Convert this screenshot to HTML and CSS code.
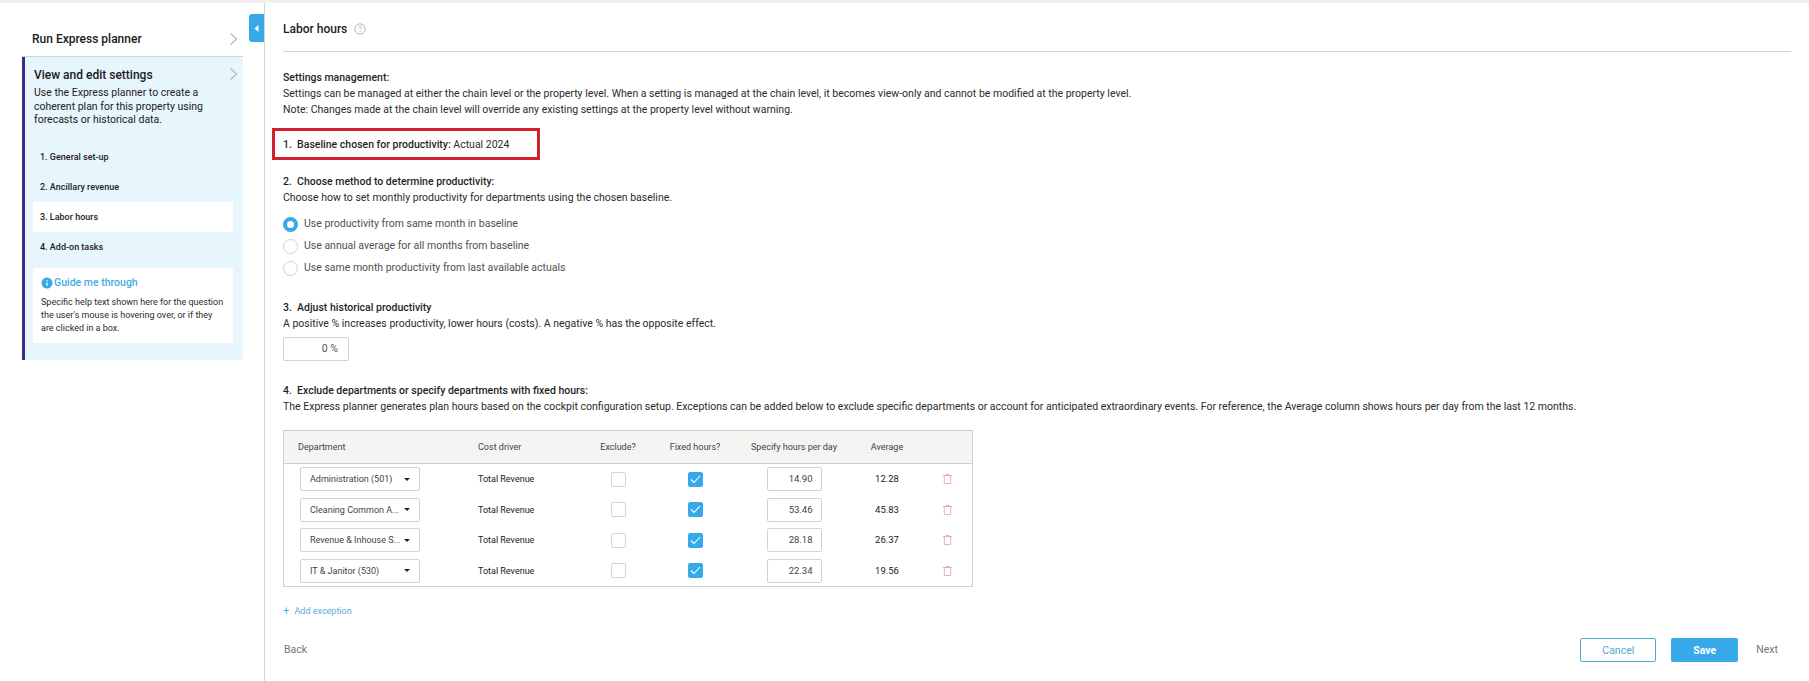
FILE: index.html
```html
<!DOCTYPE html>
<html lang="en">
<head>
<meta charset="utf-8">
<title>Labor hours</title>
<link rel="stylesheet" href="styles.css">
</head>
<body>
<div class="app">
  <aside class="sidebar">
    <div class="run">
      <span>Run Express planner</span>
      <svg class="chev" width="9" height="14" viewBox="0 0 9 14"><path d="M1.5 1.5 7.5 7l-6 5.5" fill="none" stroke="#b5b9bc" stroke-width="1.2"/></svg>
    </div>
    <section class="panel">
      <div class="panel-head">
        <h2>View and edit settings</h2>
        <svg class="chev" width="9" height="14" viewBox="0 0 9 14"><path d="M1.5 1.5 7.5 7l-6 5.5" fill="none" stroke="#b5b9bc" stroke-width="1.2"/></svg>
      </div>
      <p class="panel-desc">Use the Express planner to create a coherent plan for this property using forecasts or historical data.</p>
      <ul class="steps">
        <li>1. General set-up</li>
        <li>2. Ancillary revenue</li>
        <li class="active">3. Labor hours</li>
        <li>4. Add-on tasks</li>
      </ul>
      <div class="guide">
        <div class="guide-title">
          <svg width="12" height="12" viewBox="0 0 12 12"><circle cx="6" cy="6" r="5.5" fill="#36a9e8"/><path d="M6 5.2v3.6M6 3v1.1" stroke="#fff" stroke-width="1.2"/></svg>
          <span>Guide me through</span>
        </div>
        <p>Specific help text shown here for the question the user's mouse is hovering over, or if they are clicked in a box.</p>
      </div>
    </section>
    <button class="collapse" type="button" aria-label="Collapse"><svg width="5" height="7" viewBox="0 0 5 7"><path d="M4.5 0 0.5 3.5 4.5 7z" fill="#fff"/></svg></button>
  </aside>
  <main class="main">
    <header class="title">
      <h1>Labor hours</h1>
      <svg width="12" height="12" viewBox="0 0 12 12"><circle cx="6" cy="6" r="5.2" fill="none" stroke="#a9adaf" stroke-width=".9"/><path d="M4.5 4.7c0-2 3-2 3-.2 0 1.2-1.5 1.1-1.5 2.5M6 8.1v1" fill="none" stroke="#999d9f" stroke-width=".8"/></svg>
    </header>
    <section class="intro">
      <p class="strong">Settings management:</p>
      <p>Settings can be managed at either the chain level or the property level. When a setting is managed at the chain level, it becomes view-only and cannot be modified at the property level.</p>
      <p>Note: Changes made at the chain level will override any existing settings at the property level without warning.</p>
    </section>
    <div class="baseline"><span class="strong">1.&nbsp; Baseline chosen for productivity:</span> Actual 2024</div>
    <section class="method">
      <p class="strong">2.&nbsp; Choose method to determine productivity:</p>
      <p>Choose how to set monthly productivity for departments using the chosen baseline.</p>
      <div class="radios">
        <div class="radio-row"><span class="radio on"></span>Use productivity from same month in baseline</div>
        <div class="radio-row"><span class="radio"></span>Use annual average for all months from baseline</div>
        <div class="radio-row"><span class="radio"></span>Use same month productivity from last available actuals</div>
      </div>
    </section>
    <section class="adjust">
      <p class="strong">3.&nbsp; Adjust historical productivity</p>
      <p>A positive % increases productivity, lower hours (costs). A negative % has the opposite effect.</p>
      <div class="pct">0 %</div>
    </section>
    <section class="exclude">
      <p class="strong">4.&nbsp; Exclude departments or specify departments with fixed hours:</p>
      <p>The Express planner generates plan hours based on the cockpit configuration setup. Exceptions can be added below to exclude specific departments or account for anticipated extraordinary events. For reference, the Average column shows hours per day from the last 12 months.</p>
    </section>
    <div class="table">
      <div class="row head">
        <div class="c-dept head-dept">Department</div>
        <div class="c-cost">Cost driver</div>
        <div class="c-ex">Exclude?</div>
        <div class="c-fix">Fixed hours?</div>
        <div class="c-hrs">Specify hours per day</div>
        <div class="c-avg">Average</div>
        <div class="c-del"></div>
      </div>
      <div class="row">
        <div class="c-dept"><div class="select"><span>Administration (501)</span><i class="caret"></i></div></div>
        <div class="c-cost">Total Revenue</div>
        <div class="c-ex"><span class="check"></span></div>
        <div class="c-fix"><span class="check on"><svg width="11" height="9" viewBox="0 0 11 9"><path d="M1 4.5 4 7.5 10 1" fill="none" stroke="#fff" stroke-width="1.1"/></svg></span></div>
        <div class="c-hrs"><div class="num">14.90</div></div>
        <div class="c-avg">12.28</div>
        <div class="c-del"><svg width="9" height="10" viewBox="0 0 9 10"><path d="M0 1.5h9M3 1.5V.5h3v1M1.3 1.5v8h6.4v-8" fill="none" stroke="#e3a0a0" stroke-width=".8"/></svg></div>
      </div>
      <div class="row">
        <div class="c-dept"><div class="select"><span>Cleaning Common A...</span><i class="caret"></i></div></div>
        <div class="c-cost">Total Revenue</div>
        <div class="c-ex"><span class="check"></span></div>
        <div class="c-fix"><span class="check on"><svg width="11" height="9" viewBox="0 0 11 9"><path d="M1 4.5 4 7.5 10 1" fill="none" stroke="#fff" stroke-width="1.1"/></svg></span></div>
        <div class="c-hrs"><div class="num">53.46</div></div>
        <div class="c-avg">45.83</div>
        <div class="c-del"><svg width="9" height="10" viewBox="0 0 9 10"><path d="M0 1.5h9M3 1.5V.5h3v1M1.3 1.5v8h6.4v-8" fill="none" stroke="#e3a0a0" stroke-width=".8"/></svg></div>
      </div>
      <div class="row">
        <div class="c-dept"><div class="select"><span>Revenue &amp; Inhouse S...</span><i class="caret"></i></div></div>
        <div class="c-cost">Total Revenue</div>
        <div class="c-ex"><span class="check"></span></div>
        <div class="c-fix"><span class="check on"><svg width="11" height="9" viewBox="0 0 11 9"><path d="M1 4.5 4 7.5 10 1" fill="none" stroke="#fff" stroke-width="1.1"/></svg></span></div>
        <div class="c-hrs"><div class="num">28.18</div></div>
        <div class="c-avg">26.37</div>
        <div class="c-del"><svg width="9" height="10" viewBox="0 0 9 10"><path d="M0 1.5h9M3 1.5V.5h3v1M1.3 1.5v8h6.4v-8" fill="none" stroke="#e3a0a0" stroke-width=".8"/></svg></div>
      </div>
      <div class="row">
        <div class="c-dept"><div class="select"><span>IT &amp; Janitor (530)</span><i class="caret"></i></div></div>
        <div class="c-cost">Total Revenue</div>
        <div class="c-ex"><span class="check"></span></div>
        <div class="c-fix"><span class="check on"><svg width="11" height="9" viewBox="0 0 11 9"><path d="M1 4.5 4 7.5 10 1" fill="none" stroke="#fff" stroke-width="1.1"/></svg></span></div>
        <div class="c-hrs"><div class="num">22.34</div></div>
        <div class="c-avg">19.56</div>
        <div class="c-del"><svg width="9" height="10" viewBox="0 0 9 10"><path d="M0 1.5h9M3 1.5V.5h3v1M1.3 1.5v8h6.4v-8" fill="none" stroke="#e3a0a0" stroke-width=".8"/></svg></div>
      </div>
    </div>
    <div class="add"><span class="plus">+</span> Add exception</div>
    <footer class="actions">
      <span class="link">Back</span>
      <div class="action-right">
        <button class="btn cancel" type="button">Cancel</button>
        <button class="btn save" type="button">Save</button>
        <span class="link next">Next</span>
      </div>
    </footer>
  </main>
</div>
</body>
</html>
```
FILE: styles.css
```css
* { box-sizing: border-box; }
html, body { margin: 0; height: 100%; background: #fff; }
body {
  font-family: Roboto, "Liberation Sans", sans-serif;
  font-size: 10.5px;
  line-height: 16px;
  color: #2b2b2b;
  overflow: hidden;
}
p, h1, h2, ul { margin: 0; padding: 0; }
.strong { font-weight: 500; color: #1f1f1f; }

.app {
  display: flex;
  height: 681px;
  border-top: 3px solid #f0f0f0;
}

.sidebar {
  position: relative;
  flex: 0 0 265px;
  border-right: 1px solid #d4d5d6;
  padding: 0 21px 0 22px;
}
.run {
  height: 54px;
  padding: 28px 5px 0 10px;
  display: flex;
  justify-content: space-between;
  align-items: flex-start;
  font-size: 12px;
  font-weight: 500;
  color: #1a1a1a;
  line-height: 16px;
  border-bottom: 1px solid #ccd5da;
}
.run .chev { margin-top: 1px; }
.panel {
  height: 303px;
  background: #e7f5fd;
  border-left: 3px solid #3a2a85;
  padding: 9px 10px 0 9px;
}
.panel-head {
  display: flex;
  justify-content: space-between;
  align-items: center;
  margin-right: -5px;
}
.panel-head h2 {
  font-size: 12px;
  font-weight: 500;
  line-height: 18px;
  color: #1a1a1a;
}
.panel-head .chev { margin-top: -2px; }
.panel-desc {
  margin-top: 2px;
  line-height: 13.5px;
  color: #222;
}
.steps { list-style: none; margin: 15px 0 0 -1px; }
.steps li {
  height: 30px;
  line-height: 30px;
  padding-left: 7px;
  font-size: 9px;
  font-weight: 500;
  color: #1d1d1d;
}
.steps li.active { background: #fff; }
.guide {
  margin: 6px 0 0 -1px;
  background: #fff;
  padding: 7px 6px 0 8px;
  height: 75px;
}
.guide-title {
  display: flex;
  align-items: center;
  gap: 1px;
  font-weight: 500;
  color: #45ace2;
  line-height: 16px;
}
.guide p {
  margin-top: 5px;
  font-size: 9px;
  line-height: 13px;
  color: #2b2b2b;
}
.collapse {
  position: absolute;
  top: 11px;
  right: 0;
  width: 15px;
  height: 28px;
  border: 0;
  padding: 0;
  background: #36a9e8;
  border-radius: 3px 0 0 3px;
  display: flex;
  align-items: center;
  justify-content: center;
}

.main {
  flex: 1;
  padding: 0 18px 0 18px;
  min-width: 0;
}
.title {
  height: 49px;
  border-bottom: 1px solid #d3d3d3;
  padding-top: 18px;
  display: flex;
  align-items: flex-start;
  gap: 7px;
}
.title h1 {
  font-size: 12px;
  font-weight: 500;
  line-height: 16px;
  color: #222;
}
.title svg { margin-top: 2px; }
.intro { margin-top: 18px; }
.baseline {
  margin: 10px 0 0 -11px;
  width: 268px;
  height: 32px;
  border: 3px solid #d0202e;
  padding: 6px 0 0 8px;
  white-space: nowrap;
}
.method { margin-top: 14px; }
.radios { margin-top: 10px; display: flex; flex-direction: column; gap: 6px; }
.radio-row { display: flex; align-items: center; gap: 6px; height: 16px; color: #505050; }
.radio {
  width: 15px;
  height: 15px;
  border-radius: 50%;
  border: 1px solid #d3d3d3;
  background: #fff;
}
.radio.on { border: 4px solid #36a9e8; }
.adjust { margin-top: 24px; }
.pct {
  margin-top: 5px;
  width: 66px;
  height: 24px;
  border: 1px solid #d3d3d3;
  border-radius: 2px;
  text-align: right;
  padding: 3px 10px 0 0;
  color: #555;
}
.exclude { margin-top: 22px; }

.table {
  margin: 15px 0 0 0;
  width: 690px;
  border: 1px solid #cfcfcf;
  font-size: 9px;
}
.row {
  display: flex;
  align-items: center;
  height: 30.5px;
  color: #222;
}
.row.head {
  height: 33px;
  background: #f4f4f3;
  border-bottom: 1px solid #cfcfcf;
  color: #444;
}
.c-dept { flex: 0 0 194px; padding-left: 16px; }
.head-dept { padding-left: 14px; }
.c-cost { flex: 0 0 106px; }
.c-ex { flex: 0 0 68px; display: flex; justify-content: center; }
.c-fix { flex: 0 0 86px; display: flex; justify-content: center; }
.c-hrs { flex: 0 0 112px; display: flex; justify-content: center; }
.c-avg { flex: 0 0 74px; text-align: center; font-size: 9.5px; }
.head .c-avg { font-size: 9px; }
.c-del { flex: 1; display: flex; justify-content: center; padding-right: 2px; }
.select {
  width: 120px;
  height: 24px;
  border: 1px solid #d3d3d3;
  border-radius: 2px;
  display: flex;
  align-items: center;
  justify-content: space-between;
  padding: 0 9px 0 9px;
  color: #444;
  white-space: nowrap;
}
.caret {
  width: 0;
  height: 0;
  border-left: 3px solid transparent;
  border-right: 3px solid transparent;
  border-top: 3px solid #222;
}
.check {
  width: 15px;
  height: 15px;
  border: 1px solid #d5d5d5;
  border-radius: 2px;
  background: #fff;
  display: flex;
  align-items: center;
  justify-content: center;
}
.check.on { background: #36a9e8; border-color: #36a9e8; }
.num {
  width: 55px;
  height: 24px;
  border: 1px solid #d3d3d3;
  border-radius: 2px;
  text-align: right;
  padding: 3px 8px 0 0;
  font-size: 9.5px;
  color: #444;
}

.add {
  margin-top: 16px;
  font-size: 9px;
  color: #58add8;
}
.plus { font-size: 11px; margin-right: 3px; }
.actions {
  margin-top: 19px;
  display: flex;
  justify-content: space-between;
  align-items: center;
  height: 24px;
  padding-left: 1px;
}
.link { color: #767676; }
.action-right { display: flex; align-items: center; }
.btn {
  font-family: inherit;
  font-size: 10.5px;
  height: 24px;
  border-radius: 2px;
  padding: 0;
}
.cancel {
  width: 76px;
  border: 1px solid #4fa9cf;
  background: #fff;
  color: #4fa9cf;
}
.save {
  width: 67px;
  margin-left: 15px;
  border: 0;
  background: #36a9e8;
  color: #fff;
  font-weight: 700;
}
.next { margin-left: 18px; margin-right: 13px; }
```
